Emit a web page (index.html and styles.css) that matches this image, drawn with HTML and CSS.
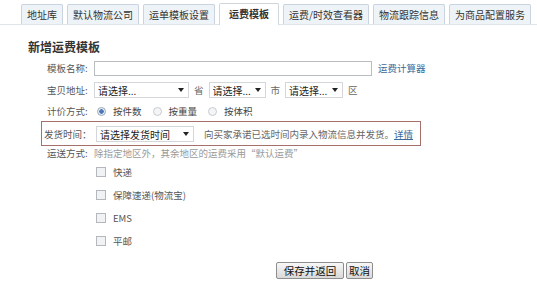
FILE: index.html
```html
<!doctype html>
<html lang="zh-CN">
<head>
	<meta charset="UTF-8" />
	<title>新增运费模板</title>
	<link rel="stylesheet" href="styles.css">
</head>
<body>
    <div id="container">
        <ul class="tabs">
            <li>地址库</li>
            <li>默认物流公司</li>
            <li>运单模板设置</li>
            <li class="on">运费模板</li>
            <li>运费/时效查看器</li>
            <li>物流跟踪信息</li>
            <li>为商品配置服务</li>
        </ul>

        <div class="form_box">
            <h2 class="title">新增运费模板</h2>

            <div class="row">
                <span class="label">模板名称:</span>
                <input type="text" class="txt" />
                <a href="#" class="link">运费计算器</a>
            </div>

            <div class="row">
                <span class="label">宝贝地址:</span>
                <span class="sel w95"><select><option>请选择...</option></select></span>
                <span class="unit">省</span>
                <span class="sel w57"><select><option>请选择...</option></select></span>
                <span class="unit">市</span>
                <span class="sel w58"><select><option>请选择...</option></select></span>
                <span class="unit">区</span>
            </div>

            <div class="row calc">
                <span class="label">计价方式:</span>
                <label class="opt"><input type="radio" name="calc" checked />按件数</label>
                <label class="opt"><input type="radio" name="calc" />按重量</label>
                <label class="opt"><input type="radio" name="calc" />按体积</label>
            </div>

            <div class="row mark">
                <span class="label">发货时间：</span>
                <span class="sel w98"><select><option>请选择发货时间</option></select></span>
                <span class="tip">向买家承诺已选时间内录入物流信息并发货。<a href="#" class="more">详情</a></span>
            </div>

            <div class="row short">
                <span class="label">运送方式:</span>
                <span class="gray">除指定地区外，其余地区的运费采用“默认运费”</span>
            </div>

            <ul class="ship_list">
                <li><label><input type="checkbox" />快递</label></li>
                <li><label><input type="checkbox" />保障速递(物流宝)</label></li>
                <li><label><input type="checkbox" />EMS</label></li>
                <li><label><input type="checkbox" />平邮</label></li>
            </ul>

            <div class="btn_box">
                <button class="btn">保存并返回</button>
                <button class="btn">取消</button>
            </div>
        </div>
    </div>
</body>
</html>
```

FILE: styles.css
```css
* { margin: 0; padding: 0; box-sizing: border-box; }
html, body { width: 100%; background: #fff; }
body { font-family: "Noto Sans CJK SC", "Liberation Sans", sans-serif; font-size: 9.5px; color: #444; }
a { text-decoration: none; }
ul, ol { list-style: none; }

.tabs { display: flex; align-items: flex-end; height: 25px; padding: 4px 0 0 21px; border-bottom: 1px solid #dfe4ea; }
.tabs li { height: 20px; line-height: 19px; padding: 0 5px; margin-right: 4px; font-size: 10px; color: #333; white-space: nowrap; background: #eef3f8; border: 1px solid #c9d4e0; border-bottom: 0; border-radius: 2px 2px 0 0; }
.tabs li.on { height: 22px; margin-bottom: -1px; padding: 0 9px; font-weight: bold; background: #fff; border-color: #cfd6de; }

.form_box { padding: 0 0 0 41px; }
.title { height: 16px; margin: 14px 0 2px -13px; font-size: 12px; line-height: 16px; font-weight: bold; color: #333; }

.row { display: flex; align-items: center; height: 22px; padding-left: 6px; }
.row .label { width: 47px; color: #555; white-space: nowrap; }
.row .txt { width: 278px; height: 15px; border: 1px solid #b9bdc2; }
.row .link { margin-left: 6px; color: #3a6a9a; }
.row .unit { margin: 0 5px 0 5px; color: #666; }
.row.calc { height: 20px; }

.sel { position: relative; display: inline-block; height: 16px; }
.sel select { width: 100%; height: 16px; padding: 0 12px 0 3px; font: inherit; font-size: 10px; color: #222; background: #fff; border: 1px solid #d4d6d9; appearance: none; -webkit-appearance: none; }
.sel:after { content: ""; position: absolute; right: 5px; top: 6px; border: 3px solid transparent; border-top: 4px solid #222; border-bottom: 0; }
.sel.w95 { width: 95px; }
.sel.w57 { width: 57px; }
.sel.w58 { width: 58px; }
.sel.w98 { width: 98px; }

.opt { display: flex; align-items: center; margin-right: 8px; color: #444; }
.opt input { width: 9px; height: 9px; margin: 0 7px 0 3px; border: 1px solid #c8cbd0; border-radius: 50%; background: #f4f5f6; appearance: none; -webkit-appearance: none; }
.opt input:checked { background: radial-gradient(circle, #4a78b8 0 2px, #e8eef6 2.5px); border-color: #9aa9bc; }

.row.mark { width: 380px; height: 25px; padding-left: 2px; border: 1px solid #a3706c; }
.row.mark .label { width: 52px; }
.row.mark .tip { margin-left: 10px; color: #666; }
.row.mark .more { color: #3a6a9a; text-decoration: underline; }

.row.short { height: 14px; }
.gray { color: #9a9a9a; }

.ship_list { padding: 0 0 0 55px; }
.ship_list li { height: 23px; display: flex; align-items: center; }
.ship_list label { display: flex; align-items: center; color: #555; }
.ship_list input { width: 10px; height: 10px; margin-right: 7px; border: 1px solid #b4b8bd; background: #f1f2f3; appearance: none; -webkit-appearance: none; }

.btn_box { display: flex; padding: 10px 0 0 235px; }
.btn { height: 17px; padding: 0 5px; margin-right: 2px; font: inherit; font-size: 10.5px; color: #111; background: linear-gradient(#f7f7f7, #d9d9d9); border: 1px solid #8e8e8e; border-radius: 2px; }
.btn:first-child { width: 68px; }
.btn:last-child { width: 27px; padding: 0; }
```
